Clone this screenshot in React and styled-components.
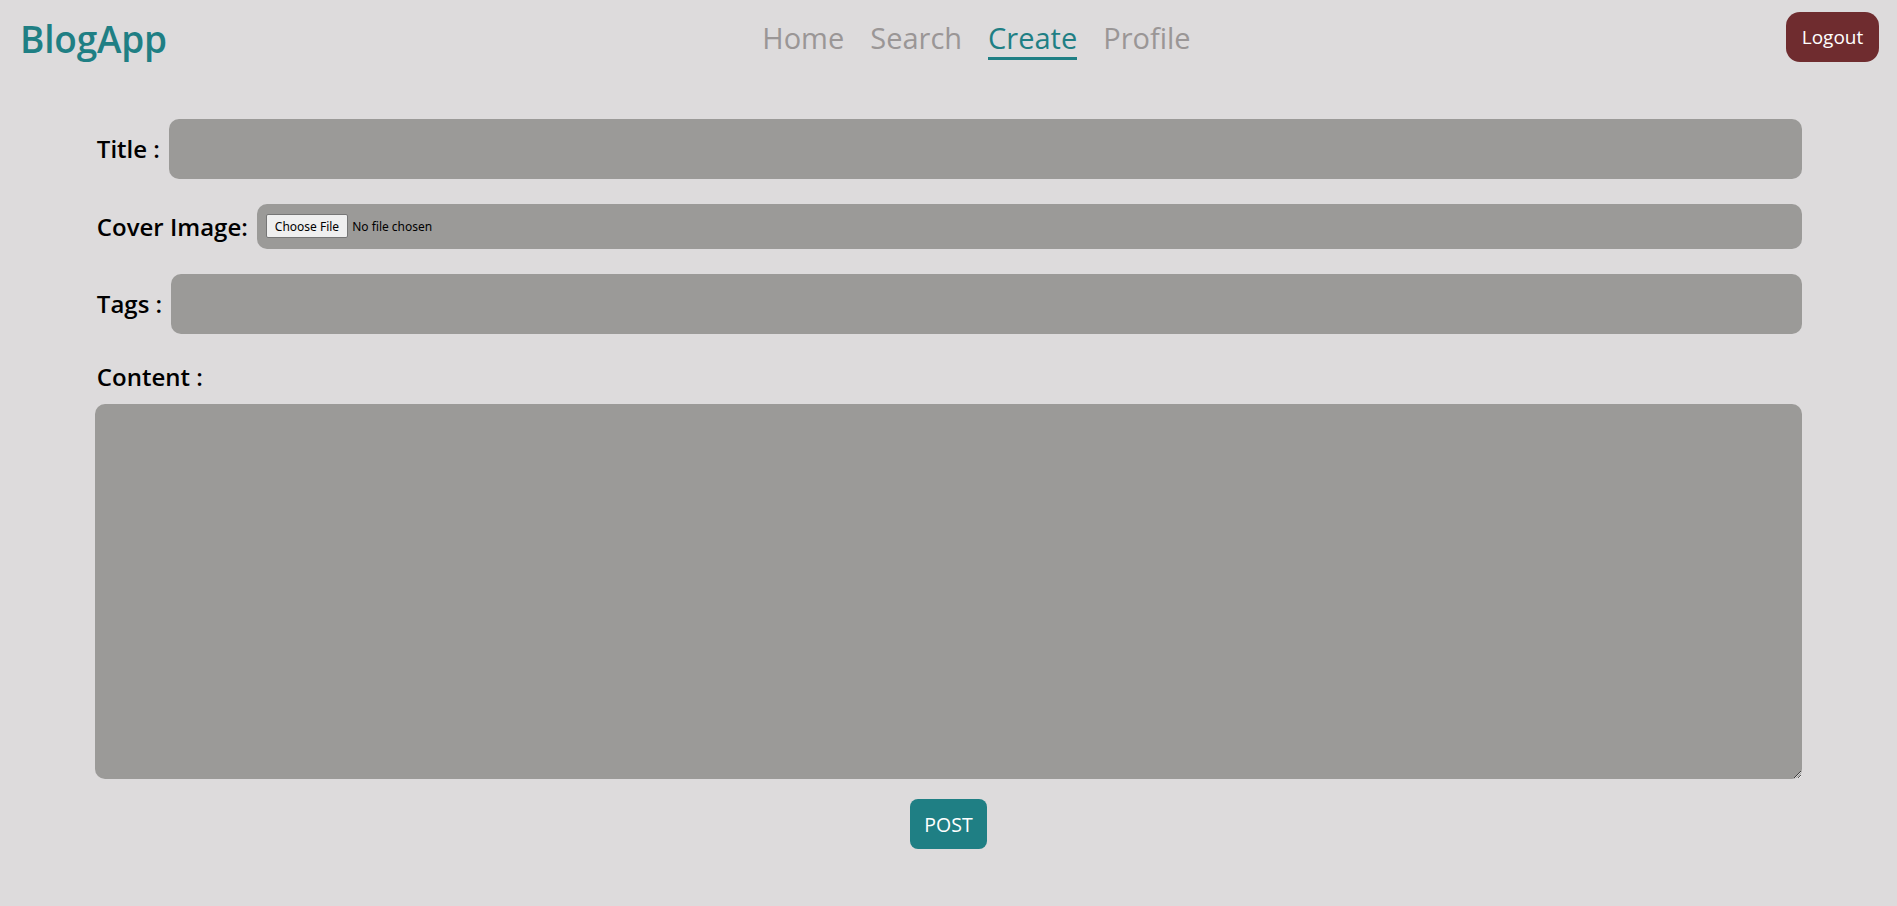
import React from "react";
import styled, { createGlobalStyle } from "styled-components";

const Global = createGlobalStyle`
  html, body { margin: 0; padding: 0; }
  body {
    background: #dddbdc;
    font-family: "Open Sans", "Noto Sans", sans-serif;
    min-height: 906px;
  }
  * { box-sizing: border-box; }
`;

const Header = styled.header`
  height: 74px;
  display: flex;
  align-items: center;
  justify-content: space-between;
  padding: 0 18px 0 20px;
`;

const Logo = styled.div`
  font-size: 37px;
  font-weight: 600;
  color: #1f7f84;
  letter-spacing: -0.2px;
  padding-top: 2px;
`;

const Nav = styled.nav`
  display: flex;
  gap: 26px;
  padding-top: 5px;
`;

const NavItem = styled.a`
  font-size: 29px;
  color: ${(p) => (p.$active ? "#1f7f84" : "#9a9696")};
  text-decoration: none;
  line-height: 38px;
  border-bottom: 3px solid ${(p) => (p.$active ? "#1f7f84" : "transparent")};
  cursor: pointer;
`;

const LogoutButton = styled.button`
  width: 93px;
  height: 50px;
  border: none;
  border-radius: 14px;
  background: #6f2c2f;
  color: #ffffff;
  font-family: "Open Sans", sans-serif;
  font-size: 19px;
  cursor: pointer;
`;

const Form = styled.form`
  width: 90%;
  margin: 45px auto 0;
  display: flex;
  flex-direction: column;
  gap: 25px;
`;

const Row = styled.div`
  display: flex;
  align-items: center;
  gap: 9px;
`;

const Label = styled.label`
  font-size: 24px;
  font-weight: 600;
  color: #000;
  line-height: 30px;
  white-space: nowrap;
  padding-left: 2px;
`;

const TextInput = styled.input`
  flex: 1;
  height: 60px;
  border: none;
  border-radius: 10px;
  background: #9b9a98;
  padding: 0 14px;
  font-size: 20px;
  outline: none;
`;

const FileInput = styled.input`
  flex: 1;
  height: 45px;
  border: none;
  border-radius: 10px;
  background: #9b9a98;
  padding: 10px 9px;
  font-family: "Noto Sans", sans-serif;
  font-size: 12px;
  color: #000;
  &::file-selector-button {
    font-family: "Noto Sans", sans-serif;
    font-size: 12px;
    height: 24px;
    padding: 0 8px;
    margin-right: 4px;
    background: #efefef;
    border: 1px solid #767676;
    border-radius: 2px;
    color: #000;
  }
`;

const ContentGroup = styled.div`
  display: flex;
  flex-direction: column;
  gap: 12px;
  padding-top: 3px;
`;

const TextArea = styled.textarea`
  display: block;
  width: 100%;
  height: 375px;
  border: none;
  border-radius: 10px;
  background: #9b9a98;
  padding: 14px;
  font-size: 18px;
  outline: none;
`;

const Actions = styled.div`
  display: flex;
  justify-content: center;
  margin-top: -5px;
`;

const PostButton = styled.button`
  width: 77px;
  height: 50px;
  border: none;
  border-radius: 8px;
  background: #1f7f84;
  color: #ffffff;
  font-family: "Open Sans", sans-serif;
  font-size: 19.5px;
  cursor: pointer;
`;

export default function App() {
  return (
    <>
      <Global />
      <Header>
        <Logo>BlogApp</Logo>
        <Nav>
          <NavItem>Home</NavItem>
          <NavItem>Search</NavItem>
          <NavItem $active>Create</NavItem>
          <NavItem>Profile</NavItem>
        </Nav>
        <LogoutButton>Logout</LogoutButton>
      </Header>
      <Form onSubmit={(e) => e.preventDefault()}>
        <Row>
          <Label htmlFor="title">Title :</Label>
          <TextInput id="title" type="text" />
        </Row>
        <Row>
          <Label htmlFor="cover">Cover Image:</Label>
          <FileInput id="cover" type="file" />
        </Row>
        <Row>
          <Label htmlFor="tags">Tags :</Label>
          <TextInput id="tags" type="text" />
        </Row>
        <ContentGroup>
          <Label htmlFor="content">Content :</Label>
          <TextArea id="content" />
        </ContentGroup>
        <Actions>
          <PostButton type="submit">POST</PostButton>
        </Actions>
      </Form>
    </>
  );
}
